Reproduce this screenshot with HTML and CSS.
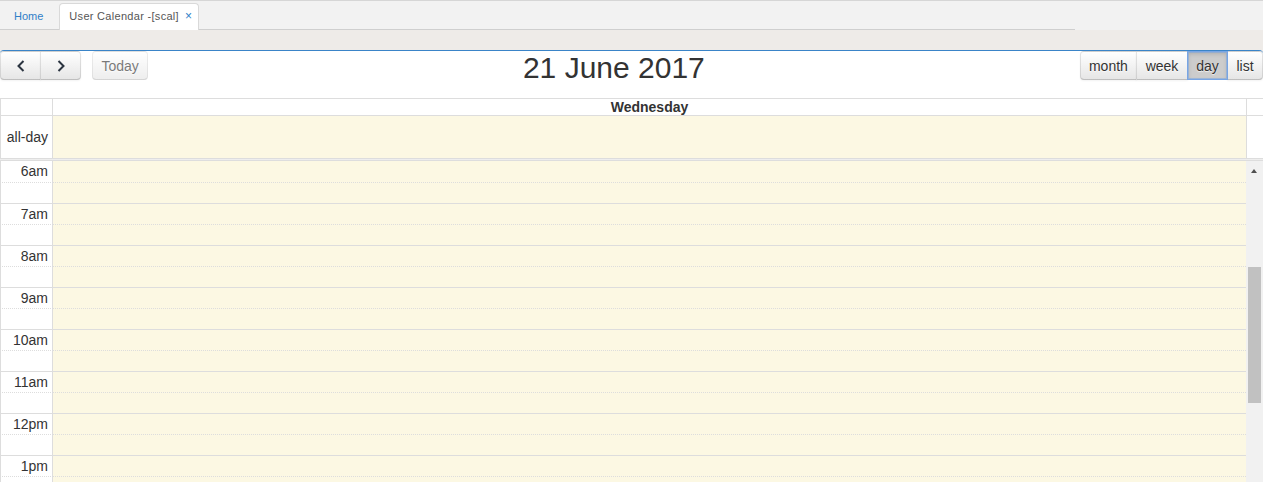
FILE: index.html
```html
<!DOCTYPE html>
<html lang="en">
<head>
<meta charset="utf-8">
<title>User Calendar</title>
<link rel="stylesheet" href="styles.css">
</head>
<body>
<div class="page">
  <div class="tabbar">
    <ul class="tabs">
      <li class="tab tab-home">Home</li>
      <li class="tab tab-active"><span class="tab-label">User Calendar -[scal]</span><span class="tab-close">×</span></li>
    </ul>
  </div>
  <div class="panel">
    <div class="toolbar">
      <div class="tb-left">
        <div class="btn-group">
          <button class="btn btn-icon" type="button" aria-label="prev"><svg width="8" height="12" viewBox="0 0 8 12"><polyline points="6.5,1 1.5,6 6.5,11" fill="none" stroke="#2b3440" stroke-width="2"/></svg></button>
          <button class="btn btn-icon" type="button" aria-label="next"><svg width="8" height="12" viewBox="0 0 8 12"><polyline points="1.5,1 6.5,6 1.5,11" fill="none" stroke="#2b3440" stroke-width="2"/></svg></button>
        </div>
        <button class="btn btn-today" type="button" disabled>Today</button>
      </div>
      <div class="tb-center"><h2 class="title">21 June 2017</h2></div>
      <div class="tb-right btn-group">
        <button class="btn" type="button">month</button>
        <button class="btn" type="button">week</button>
        <button class="btn btn-active" type="button">day</button>
        <button class="btn" type="button">list</button>
      </div>
    </div>

    <div class="view">
      <div class="row row-head">
        <div class="axis"></div>
        <div class="day-cell day-head">Wednesday</div>
        <div class="gutter"></div>
      </div>
      <div class="row row-allday">
        <div class="axis axis-allday">all-day</div>
        <div class="day-cell today"></div>
        <div class="gutter"></div>
      </div>
      <div class="divider"></div>
      <div class="body">
        <div class="slats">
          <div class="slat first"><div class="slat-axis">6am</div><div class="slot"></div></div>
          <div class="slat minor"><div class="slat-axis"></div><div class="slot"></div></div>
          <div class="slat"><div class="slat-axis">7am</div><div class="slot"></div></div>
          <div class="slat minor"><div class="slat-axis"></div><div class="slot"></div></div>
          <div class="slat"><div class="slat-axis">8am</div><div class="slot"></div></div>
          <div class="slat minor"><div class="slat-axis"></div><div class="slot"></div></div>
          <div class="slat"><div class="slat-axis">9am</div><div class="slot"></div></div>
          <div class="slat minor"><div class="slat-axis"></div><div class="slot"></div></div>
          <div class="slat"><div class="slat-axis">10am</div><div class="slot"></div></div>
          <div class="slat minor"><div class="slat-axis"></div><div class="slot"></div></div>
          <div class="slat"><div class="slat-axis">11am</div><div class="slot"></div></div>
          <div class="slat minor"><div class="slat-axis"></div><div class="slot"></div></div>
          <div class="slat"><div class="slat-axis">12pm</div><div class="slot"></div></div>
          <div class="slat minor"><div class="slat-axis"></div><div class="slot"></div></div>
          <div class="slat"><div class="slat-axis">1pm</div><div class="slot"></div></div>
          <div class="slat minor"><div class="slat-axis"></div><div class="slot"></div></div>
          <div class="slat"><div class="slat-axis">2pm</div><div class="slot"></div></div>
          <div class="slat minor"><div class="slat-axis"></div><div class="slot"></div></div>
        </div>
        <div class="scrollbar">
          <div class="sb-arrow"></div>
          <div class="sb-thumb"></div>
        </div>
      </div>
    </div>
  </div>
</div>
</body>
</html>
```
FILE: styles.css
```css
html, body {
  margin: 0;
  padding: 0;
}
body {
  font-family: "Liberation Sans", Arial, sans-serif;
  background: #eeebe8;
  color: #333;
}
.page {
  height: 482px;
  overflow: hidden;
}

/* ---------- tab bar ---------- */
.tabbar {
  background: #f2f2f2;
  border-top: 1px solid #d6d6d6;
  height: 29px;
}
.tabs {
  list-style: none;
  margin: 0;
  padding: 0;
  width: 1075px;
  height: 28px;
  border-bottom: 1px solid #cfcfcf;
  display: flex;
  align-items: flex-end;
}
.tab {
  font-size: 11px;
  white-space: nowrap;
}
.tab-home {
  height: 25px;
  line-height: 25px;
  padding: 0 14px;
  margin-right: 2px;
  color: #3080c8;
}
.tab-active {
  background: #fff;
  border: 1px solid #d9d9d9;
  border-bottom: 0;
  border-radius: 4px 4px 0 0;
  margin-bottom: -1px;
  height: 26px;
  line-height: 25px;
  padding: 0 6px 0 9px;
  color: #555;
}
.tab-label {
  letter-spacing: 0.3px;
}
.tab-close {
  margin-left: 6px;
  font-size: 12px;
  color: #3080c8;
}

/* ---------- panel ---------- */
.panel {
  margin-top: 20px;
  background: #fff;
  border-top: 1px solid #3a84c8;
  border-radius: 4px 4px 0 0;
  height: 500px;
}

/* ---------- toolbar ---------- */
.toolbar {
  display: flex;
  align-items: flex-start;
  margin-bottom: 14px;
}
.tb-left {
  display: flex;
}
.tb-center {
  flex: 1;
  text-align: center;
}
.title {
  margin: 0;
  font-size: 30px;
  line-height: 33px;
  font-weight: normal;
  color: #333;
}
.btn-group {
  display: flex;
}
.btn {
  box-sizing: border-box;
  height: 29px;
  margin: 0;
  padding: 0 8.4px;
  font-family: "Liberation Sans", Arial, sans-serif;
  font-size: 14px;
  color: #333;
  background-color: #f5f5f5;
  background-image: linear-gradient(to bottom, #ffffff, #e6e6e6);
  border: 1px solid;
  border-color: rgba(0,0,0,.1) rgba(0,0,0,.1) rgba(0,0,0,.25);
  border-radius: 0;
  box-shadow: inset 0 1px 0 rgba(255,255,255,.2), 0 1px 2px rgba(0,0,0,.05);
  text-shadow: 0 1px 1px rgba(255,255,255,.75);
  white-space: nowrap;
  cursor: pointer;
}
.btn-group .btn + .btn {
  margin-left: -1px;
}
.btn-group .btn:first-child {
  border-radius: 4px 0 0 4px;
}
.btn-group .btn:last-child {
  border-radius: 0 4px 4px 0;
}
.btn-icon {
  width: 41px;
  padding: 0;
  display: flex;
  align-items: center;
  justify-content: center;
}
.btn-icon svg {
  display: block;
}
.btn-today {
  margin-left: 11px;
  border-radius: 4px;
  opacity: .65;
  box-shadow: none;
  cursor: default;
}
.btn-active {
  position: relative;
  z-index: 1;
  background-color: #cccccc;
  background-image: none;
  border-color: #78a5e4;
  box-shadow: inset 0 0 0 1px rgba(120,165,228,.55), inset 0 2px 4px rgba(0,0,0,.15);
}

/* ---------- grid ---------- */
.view {
  font-size: 14px;
}
.row {
  display: flex;
  border-bottom: 1px solid #ddd;
}
.row-head {
  border-top: 1px solid #ddd;
}
.axis {
  width: 43px;
  padding: 0 4px;
  border-left: 1px solid #ddd;
  border-right: 1px solid #ddd;
  text-align: right;
  white-space: nowrap;
}
.day-cell {
  flex: 1;
  border-right: 1px solid #ddd;
}
.gutter {
  width: 16px;
}
.day-head {
  height: 16px;
  line-height: 16px;
  text-align: center;
  font-weight: bold;
}
.row-allday {
  height: 42px;
  border-bottom: 0;
}
.axis-allday {
  line-height: 42px;
}
.today {
  background: #fcf8e3;
}
.divider {
  height: 1px;
  background: #eee;
  border-top: 1px solid #ddd;
  border-bottom: 1px solid #ddd;
}

.body {
  display: flex;
}
.slats {
  width: 1246px;
}
.slat {
  display: flex;
}
.slat > div {
  height: 20px;
  border-top: 1px solid #ddd;
}
.slat.minor > div {
  border-top-style: dotted;
}
.slat.first > div {
  height: 21px;
  border-top: 0;
}
.slat-axis {
  width: 43px;
  padding: 0 4px;
  border-left: 1px solid #ddd;
  border-right: 1px solid #ddd;
  text-align: right;
  line-height: 20px;
  white-space: nowrap;
  background: #fff;
}
.slat.first .slat-axis {
  line-height: 21px;
}
.slot {
  flex: 1;
  background: #fcf8e3;
}

.scrollbar {
  width: 17px;
  background: #f1f1f1;
  height: 400px;
}
.sb-arrow {
  width: 0;
  height: 0;
  margin: 8px 0 0 5px;
  border-left: 3.5px solid transparent;
  border-right: 3.5px solid transparent;
  border-bottom: 4px solid #505050;
}
.sb-thumb {
  width: 13px;
  height: 136px;
  margin: 94px 0 0 2px;
  background: #c1c1c1;
}
```
